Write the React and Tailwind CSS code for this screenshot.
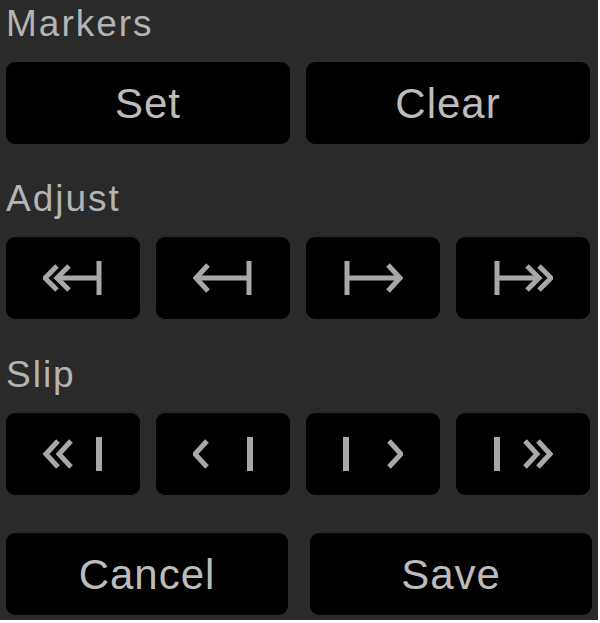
/* ================= ICONS ================= */

const STROKE = "#a8a8a8";

function Icon({ children }) {
  return (
    <svg width="60" height="36" viewBox="0 0 60 36" fill="none" stroke={STROKE} strokeWidth="5">
      {children}
    </svg>
  );
}

const icons = {
  adjustFarLeft: (
    <Icon>
      <polyline points="14,6 2,18 14,30" />
      <polyline points="26,6 14,18 26,30" />
      <line x1="14" y1="18" x2="56" y2="18" />
      <line x1="56" y1="1" x2="56" y2="35" />
    </Icon>
  ),
  adjustLeft: (
    <Icon>
      <polyline points="15,5 3,18 15,31" />
      <line x1="3" y1="18" x2="56" y2="18" />
      <line x1="56" y1="1" x2="56" y2="35" />
    </Icon>
  ),
  adjustRight: (
    <Icon>
      <line x1="4" y1="1" x2="4" y2="35" />
      <line x1="4" y1="18" x2="57" y2="18" />
      <polyline points="45,5 57,18 45,31" />
    </Icon>
  ),
  adjustFarRight: (
    <Icon>
      <line x1="4" y1="1" x2="4" y2="35" />
      <line x1="4" y1="18" x2="46" y2="18" />
      <polyline points="34,6 46,18 34,30" />
      <polyline points="46,6 58,18 46,30" />
    </Icon>
  ),
  slipFarLeft: (
    <Icon>
      <polyline points="15,5 3,18 15,31" />
      <polyline points="28,5 16,18 28,31" />
      <line x1="56" y1="1" x2="56" y2="35" strokeWidth="6" />
    </Icon>
  ),
  slipLeft: (
    <Icon>
      <polyline points="14,5 2,18 14,31" />
      <line x1="57" y1="1" x2="57" y2="35" strokeWidth="6" />
    </Icon>
  ),
  slipRight: (
    <Icon>
      <line x1="3" y1="1" x2="3" y2="35" strokeWidth="6" />
      <polyline points="46,5 58,18 46,31" />
    </Icon>
  ),
  slipFarRight: (
    <Icon>
      <line x1="4" y1="1" x2="4" y2="35" strokeWidth="6" />
      <polyline points="32,5 44,18 32,31" />
      <polyline points="45,5 57,18 45,31" />
    </Icon>
  ),
};

/* ================= COMPONENT ================= */

export default function App() {
  return (
    <main
      className="w-[598px] h-[620px] bg-[#2a2a2a] pt-[2px] pl-[6px] pr-[8px] text-[#bcbcbc]"
      style={{ fontFamily: '"Liberation Sans", Arial, sans-serif' }}
    >
      <Label>Markers</Label>
      <div className="grid grid-cols-2 gap-4">
        <TextButton>Set</TextButton>
        <TextButton>Clear</TextButton>
      </div>

      <Label className="mt-[33px]">Adjust</Label>
      <div className="grid grid-cols-4 gap-[16px]">
        <IconButton>{icons.adjustFarLeft}</IconButton>
        <IconButton>{icons.adjustLeft}</IconButton>
        <IconButton>{icons.adjustRight}</IconButton>
        <IconButton>{icons.adjustFarRight}</IconButton>
      </div>

      <Label className="mt-[34px]">Slip</Label>
      <div className="grid grid-cols-4 gap-[16px]">
        <IconButton>{icons.slipFarLeft}</IconButton>
        <IconButton>{icons.slipLeft}</IconButton>
        <IconButton>{icons.slipRight}</IconButton>
        <IconButton>{icons.slipFarRight}</IconButton>
      </div>

      <div className="grid grid-cols-2 gap-[22px] mt-[38px] -mr-[2px]">
        <TextButton>Cancel</TextButton>
        <TextButton>Save</TextButton>
      </div>
    </main>
  );
}

/* ================= UI HELPERS ================= */

function Label({ children, className = "" }) {
  return (
    <div className={`h-[44px] leading-[44px] mb-[16px] text-[37px] tracking-[2px] text-[#b4b4b4] ${className}`}>
      {children}
    </div>
  );
}

function TextButton({ children }) {
  return (
    <button className="h-[82px] rounded-[9px] bg-black text-[42px] tracking-[1px] text-[#bcbcbc] flex items-center justify-center">
      {children}
    </button>
  );
}

function IconButton({ children }) {
  return (
    <button className="h-[82px] rounded-[9px] bg-black flex items-center justify-center">
      {children}
    </button>
  );
}
